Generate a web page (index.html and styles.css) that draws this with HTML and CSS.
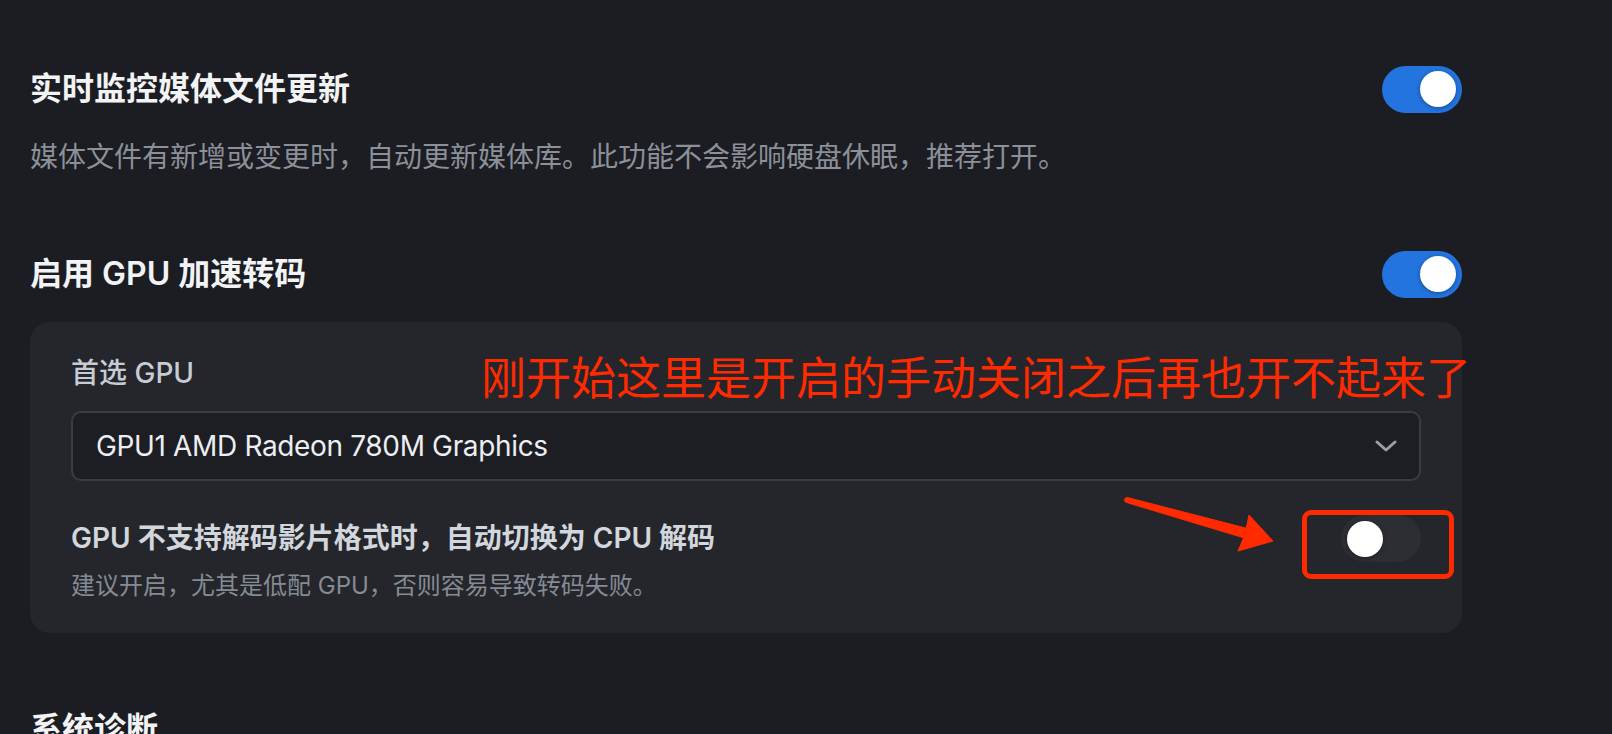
FILE: index.html
```html
<!DOCTYPE html>
<html lang="zh-CN">
<head>
<meta charset="utf-8">
<title>设置</title>
<link rel="stylesheet" href="styles.css">
</head>
<body>
<main class="page">
  <section class="section">
    <div class="row">
      <h2 class="title">实时监控媒体文件更新</h2>
      <span class="toggle on"><span class="knob"></span></span>
    </div>
    <p class="desc">媒体文件有新增或变更时，自动更新媒体库。此功能不会影响硬盘休眠，推荐打开。</p>
  </section>

  <section class="section gap">
    <div class="row">
      <h2 class="title">启用 GPU 加速转码</h2>
      <span class="toggle on"><span class="knob"></span></span>
    </div>
    <div class="card">
      <div class="field-label">首选 GPU</div>
      <div class="select">
        <span class="select-text">GPU1 AMD Radeon 780M Graphics</span>
        <svg class="chevron" width="22" height="14" viewBox="0 0 22 14"><polyline points="2,3 11,11 20,3" fill="none" stroke="#9a9ea6" stroke-width="3" stroke-linecap="round" stroke-linejoin="round"/></svg>
      </div>
      <div class="sub-row">
        <div class="sub-text">
          <div class="sub-label">GPU 不支持解码影片格式时，自动切换为 CPU 解码</div>
          <div class="sub-desc">建议开启，尤其是低配 GPU，否则容易导致转码失败。</div>
        </div>
        <span class="toggle off"><span class="knob"></span></span>
      </div>
    </div>
  </section>

  <section class="section gap2">
    <div class="row">
      <h2 class="title">系统诊断</h2>
    </div>
  </section>

  <div class="note">刚开始这里是开启的手动关闭之后再也开不起来了</div>
  <div class="note-box"></div>
  <svg class="note-arrow" width="1612" height="734" viewBox="0 0 1612 734">
    <path d="M1127.7,497.6 L1246.3,528.2 L1249,515 L1273,541 L1238,551 L1243.6,537.8 L1126.3,502.4 A2.5,2.5 0 0 1 1127.7,497.6 Z" fill="#ff2a00" stroke="#ff2a00" stroke-width="1" stroke-linejoin="round"/>
  </svg>
</main>
</body>
</html>
```

FILE: styles.css
```css
html, body {
  margin: 0;
  padding: 0;
  height: 734px;
  overflow: hidden;
  background: #1b1d22;
}

body {
  font-family: Inter, "Noto Sans CJK SC", sans-serif;
  color: #f2f3f5;
}

.page {
  position: relative;
  padding: 65px 150px 0 30px;
  height: 734px;
  box-sizing: border-box;
}

.section.gap {
  margin-top: 73px;
}

.section.gap2 {
  margin-top: 72px;
}

.row {
  display: flex;
  align-items: center;
  justify-content: space-between;
  height: 48px;
}

.title {
  margin: 0;
  font-size: 32px;
  line-height: 48px;
  font-weight: 600;
  color: #f2f3f5;
}

.desc {
  margin: 24px 0 0;
  font-size: 28px;
  line-height: 40px;
  color: #8b9099;
}

.toggle {
  position: relative;
  display: block;
  flex: none;
  width: 80px;
  height: 47px;
  border-radius: 24px;
  box-sizing: border-box;
}

.toggle.on {
  background: #2374de;
}

.toggle.off {
  background: #2c2e33;
}

.knob {
  position: absolute;
  top: 5.5px;
  width: 36px;
  height: 36px;
  border-radius: 50%;
  background: #ffffff;
  box-shadow: 0 1px 4px rgba(0, 0, 0, 0.35);
}

.toggle.on .knob {
  right: 6px;
}

.toggle.off .knob {
  left: 6px;
}

.card {
  margin-top: 24px;
  background: #24262b;
  border-radius: 20px;
  padding: 31px 41px 30px;
}

.field-label {
  font-size: 28px;
  line-height: 40px;
  font-weight: 500;
  color: #c7ccd4;
}

.select {
  margin-top: 18px;
  height: 70px;
  box-sizing: border-box;
  border: 2px solid #393c43;
  border-radius: 10px;
  background: #1c1e23;
  display: flex;
  align-items: center;
  justify-content: space-between;
  padding: 0 22px 0 23px;
}

.select-text {
  font-size: 28px;
  letter-spacing: -0.35px;
  color: #eceef1;
}

.chevron {
  display: block;
}

.sub-row {
  margin-top: 34px;
  display: flex;
  align-items: flex-start;
  justify-content: space-between;
}

.sub-label {
  font-size: 28px;
  line-height: 47px;
  font-weight: 600;
  color: #d2d6dd;
}

.sub-desc {
  margin-top: 7px;
  font-size: 24px;
  line-height: 34px;
  color: #858b94;
}

.note {
  position: absolute;
  left: 481px;
  top: 353px;
  font-family: "Noto Sans CJK SC", sans-serif;
  font-size: 45px;
  line-height: 45px;
  font-weight: 400;
  color: #ff2a00;
  white-space: nowrap;
}

.note-box {
  position: absolute;
  left: 1302px;
  top: 510px;
  width: 152px;
  height: 69px;
  box-sizing: border-box;
  border: 5px solid #ff2a00;
  border-radius: 9px;
}

.note-arrow {
  position: absolute;
  left: 0;
  top: 0;
  pointer-events: none;
}
```
